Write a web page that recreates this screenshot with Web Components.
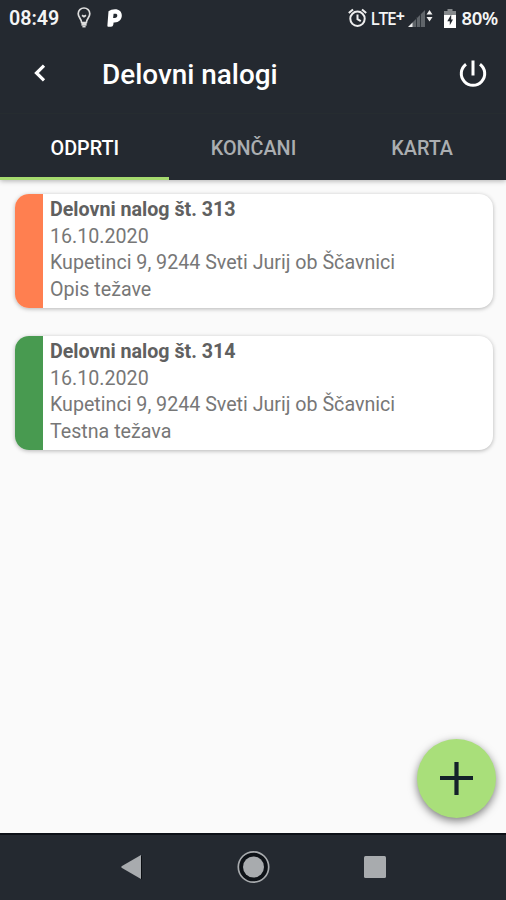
<!DOCTYPE html>
<html lang="sl">
<head>
<meta charset="utf-8">
<title>Delovni nalogi</title>
<style>
  html, body {
    margin: 0;
    height: 100%;
    background: #fafafa;
    font-family: Roboto, "Liberation Sans", sans-serif;
  }
</style>
</head>
<body>
<work-orders-app></work-orders-app>

<script>
class StatusBar extends HTMLElement {
  constructor() {
    super();
    this.attachShadow({ mode: "open" });
  }

  static get styles() {
    return /* css */`
      :host {
        display: flex;
        align-items: center;
        justify-content: space-between;
        height: 36px;
        padding: 0 8px 0 9px;
        color: #f4f5f5;
        font-weight: 600;
        font-size: 19.7px;
        line-height: 36px;
        white-space: nowrap;
      }

      .side {
        display: flex;
        align-items: center;
      }

      .time {
        padding-top: 1px;
      }

      svg {
        display: block;
      }

      .bulb {
        margin-left: 18px;
      }

      .app {
        margin-left: 16px;
      }

      .network {
        margin-left: 4px;
        width: 35px;
        font: 500 17.4px/34px "Noto Sans", sans-serif;
        letter-spacing: -1.1px;
      }

      .network sup {
        font-size: 16px;
        font-weight: 700;
        line-height: 0;
        vertical-align: 3px;
      }

      .signal {
        margin-left: 2px;
      }

      .battery {
        margin: 0 6px 0 11px;
      }

      .percent {
        font: 600 18.5px/34px "Noto Sans", sans-serif;
        letter-spacing: -0.3px;
      }
    `;
  }

  connectedCallback() {
    this.render();
  }

  render() {
    this.shadowRoot.innerHTML = /* html */`
    <style>${StatusBar.styles}</style>
    <div class="side">
      <span class="time">08:49</span>
      <svg class="bulb" width="14" height="22" viewBox="0 0 14 22" fill="none" stroke="#ddd" stroke-width="1.7">
        <path d="M4.600 15.500C4.600 12 1.200 10.500 1.200 6.800a5.800 5.800 0 0 1 11.600 0c0 3.700-3.400 5.200-3.400 8.700zM5 8.200l2 1.500 2-1.500"/>
        <path stroke-width="3" d="M4.400 17.200h5.200"/>
        <path d="M5.400 19.600h3.200"/>
      </svg>
      <svg class="app" width="15" height="18" viewBox="0 0 15 18">
        <path fill="#fff" fill-rule="evenodd" d="M1.500 2.200Q4 .3 8 .3c4.200 0 6.800 2.500 6.800 6.200 0 4.200-3 6.900-7.200 6.900H6.600l-.3 2.400q-.3 1.900-2.300 1.900H1Q.2 17.700.4 16.600zM6.600 4.800 6.100 8.900h1.600c1.700 0 2.600-.9 2.600-2.300 0-1.200-.7-1.800-2-1.800z"/>
      </svg>
    </div>
    <div class="side">
      <svg width="19" height="20" viewBox="0 0 19 20" fill="none" stroke="#eee" stroke-width="2">
        <circle cx="9.500" cy="10.800" r="7.200"/>
        <path d="M.8 5 5 1.400M18.200 5 14 1.400M9.500 6.500v4.700l3.300 2"/>
      </svg>
      <span class="network">LTE<sup>+</sup></span>
      <svg class="signal" width="25" height="19" viewBox="0 0 25 19">
        <path fill="#60656a" d="M4 14 17 1v17H4z"/>
        <path fill="#eee" d="M0 18l4.500-4.500V18z"/>
        <path stroke="#30363c" d="M8.500 8v10M12.500 5v13"/>
        <path fill="#eee" d="m21.500 1 3 4.500h-6zM21.500 12.500l3-4.500h-6z"/>
      </svg>
      <svg class="battery" width="12" height="19" viewBox="0 0 12 19">
        <path fill="#85898c" d="M3.500 0h5v2H12v5H0V2h3.500z"/>
        <path fill="#fff" d="M0 6h12v13H0z"/>
        <path fill="#242930" d="M7.200 5.500 3.300 12.200h2.500v4L9 10.500H7.200z"/>
      </svg>
      <span class="percent">80%</span>
    </div>`;
  }
}

class AppHeader extends HTMLElement {
  constructor() {
    super();
    this.attachShadow({ mode: "open" });
  }

  static get styles() {
    return /* css */`
      :host {
        display: flex;
        align-items: center;
        height: 77px;
        padding: 0 19px 0 33px;
        color: #fff;
      }

      h1 {
        flex: 1;
        margin: 0 0 0 55px;
        font-size: 27.9px;
        font-weight: 500;
        line-height: 36px;
      }

      svg {
        display: block;
      }

      .back {
        margin-bottom: 3px;
      }

      .power {
        margin-bottom: 2px;
      }
    `;
  }

  connectedCallback() {
    this.render();
  }

  render() {
    this.shadowRoot.innerHTML = /* html */`
    <style>${AppHeader.styles}</style>
    <svg class="back" width="14" height="18" viewBox="0 0 14 18" fill="none" stroke="#fff" stroke-width="3.200">
      <path d="M11 1.700 3.500 9l7.500 7.300"/>
    </svg>
    <h1><slot></slot></h1>
    <svg class="power" width="28" height="28" viewBox="0 0 28 28" fill="none" stroke="#fff" stroke-width="3">
      <path d="M14 .5v15M7 4.200a11.700 11.700 0 1 0 14 0"/>
    </svg>`;
  }
}

class TabItem extends HTMLElement {
  constructor() {
    super();
    this.attachShadow({ mode: "open" });
  }

  static get styles() {
    return /* css */`
      :host {
        box-sizing: border-box;
        display: block;
        height: 66px;
        padding: 21px 0 0 1px;
        border-bottom: 3px solid transparent;
        color: #abaeb1;
        font-size: 19.8px;
        font-weight: 500;
        line-height: 28px;
        text-align: center;
      }

      :host([active]) {
        border-color: #a5d96e;
        color: #fff;
      }
    `;
  }

  connectedCallback() {
    this.render();
  }

  render() {
    this.shadowRoot.innerHTML = /* html */`
    <style>${TabItem.styles}</style>
    <slot></slot>`;
  }
}

class OrderCard extends HTMLElement {
  constructor() {
    super();
    this.attachShadow({ mode: "open" });
  }

  static get styles() {
    return /* css */`
      :host {
        display: flex;
        height: 114px;
        overflow: hidden;
        border-radius: 14px;
        background: #fff;
        box-shadow: 0 1px 4px rgba(0, 0, 0, 0.28);
        color: #777;
        font-size: 19.65px;
        line-height: 26.7px;
      }

      .mark {
        width: 28.5px;
        background: var(--mark-color);
      }

      .text {
        padding: 3px 0 0 7px;
        white-space: nowrap;
      }

      .title {
        color: #606060;
        font-weight: 700;
      }
    `;
  }

  connectedCallback() {
    this.render();
  }

  render() {
    this.shadowRoot.innerHTML = /* html */`
    <style>${OrderCard.styles}</style>
    <div class="mark"></div>
    <div class="text">
      <div class="title"><slot name="title"></slot></div>
      <div><slot name="date"></slot></div>
      <div><slot name="address"></slot></div>
      <div><slot></slot></div>
    </div>`;
  }
}

class AddButton extends HTMLElement {
  constructor() {
    super();
    this.attachShadow({ mode: "open" });
  }

  static get styles() {
    return /* css */`
      :host {
        display: grid;
        place-items: center;
        width: 79px;
        height: 79px;
        border-radius: 50%;
        background: #a9df7a;
        box-shadow: 0 3px 8px rgba(0, 0, 0, 0.5);
      }
    `;
  }

  connectedCallback() {
    this.render();
  }

  render() {
    this.shadowRoot.innerHTML = /* html */`
    <style>${AddButton.styles}</style>
    <svg width="33" height="33" viewBox="0 0 33 33" stroke="#14212a" stroke-width="4.200">
      <path d="M16.500 0v33M0 16h33"/>
    </svg>`;
  }
}

class NavigationBar extends HTMLElement {
  constructor() {
    super();
    this.attachShadow({ mode: "open" });
  }

  static get styles() {
    return /* css */`
      :host {
        box-sizing: border-box;
        display: flex;
        align-items: center;
        justify-content: space-between;
        height: 67px;
        padding: 0 120px 2px 121px;
        border-top: 2px solid #0d1117;
        background: #242930;
      }

      svg {
        display: block;
      }
    `;
  }

  connectedCallback() {
    this.render();
  }

  render() {
    this.shadowRoot.innerHTML = /* html */`
    <style>${NavigationBar.styles}</style>
    <svg width="21" height="24" viewBox="0 0 21 24">
      <path fill="#0b0e12" d="M20 1h2v23h-2z"/>
      <path fill="#a8abae" d="M20 0v24L1 13q-1.500-1 0-2z"/>
    </svg>
    <svg width="34" height="34" viewBox="0 0 34 34">
      <circle cx="17.500" cy="17" r="15.200" fill="#0e1217" stroke="#a8abae" stroke-width="1.700"/>
      <circle cx="17.500" cy="17" r="10.500" fill="#a8abae"/>
    </svg>
    <svg width="22" height="22" viewBox="0 0 22 22">
      <rect width="22" height="22" rx="1.500" fill="#a8abae"/>
    </svg>`;
  }
}

class WorkOrdersApp extends HTMLElement {
  constructor() {
    super();
    this.attachShadow({ mode: "open" });
  }

  static get styles() {
    return /* css */`
      :host {
        display: flex;
        flex-direction: column;
        height: 900px;
        overflow: hidden;
      }

      header {
        background: #242930;
        box-shadow: 0 1px 5px rgba(0, 0, 0, 0.3);
      }

      nav {
        display: grid;
        grid-template-columns: repeat(3, 1fr);
        border-top: 1px solid #262c30;
      }

      main {
        position: relative;
        flex: 1;
        display: flex;
        flex-direction: column;
        gap: 28px;
        padding: 14px 13px 0 14.5px;
      }

      add-button {
        position: absolute;
        right: 10.5px;
        bottom: 15px;
      }
    `;
  }

  connectedCallback() {
    this.render();
  }

  render() {
    this.shadowRoot.innerHTML = /* html */`
    <style>${WorkOrdersApp.styles}</style>
    <header>
      <status-bar></status-bar>
      <app-header>Delovni nalogi</app-header>
      <nav>
        <tab-item active>ODPRTI</tab-item>
        <tab-item>KONČANI</tab-item>
        <tab-item>KARTA</tab-item>
      </nav>
    </header>
    <main>
      <order-card style="--mark-color: #ff7f50">
        <span slot="title">Delovni nalog št. 313</span>
        <span slot="date">16.10.2020</span>
        <span slot="address">Kupetinci 9, 9244 Sveti Jurij ob Ščavnici</span>
        Opis težave
      </order-card>
      <order-card style="--mark-color: #489a50">
        <span slot="title">Delovni nalog št. 314</span>
        <span slot="date">16.10.2020</span>
        <span slot="address">Kupetinci 9, 9244 Sveti Jurij ob Ščavnici</span>
        Testna težava
      </order-card>
      <add-button></add-button>
    </main>
    <navigation-bar></navigation-bar>`;
  }
}

customElements.define("status-bar", StatusBar);
customElements.define("app-header", AppHeader);
customElements.define("tab-item", TabItem);
customElements.define("order-card", OrderCard);
customElements.define("add-button", AddButton);
customElements.define("navigation-bar", NavigationBar);
customElements.define("work-orders-app", WorkOrdersApp);
</script>
</body>
</html>
